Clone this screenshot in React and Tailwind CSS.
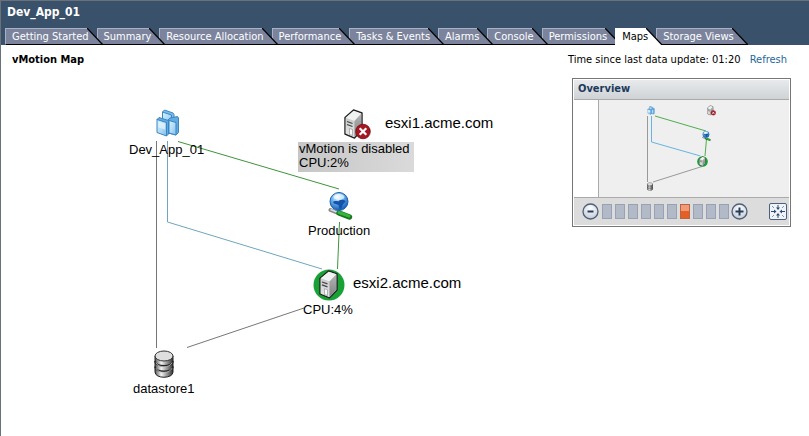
import { useState } from "react";

const tabs = [
  "Getting Started",
  "Summary",
  "Resource Allocation",
  "Performance",
  "Tasks & Events",
  "Alarms",
  "Console",
  "Permissions",
  "Maps",
  "Storage Views",
];

const zoomLevels = [0, 1, 2, 3, 4, 5, 6, 7, 8, 9];

function Defs() {
  return (
    <svg width="0" height="0" className="absolute" aria-hidden="true">
      <defs>
        <linearGradient id="cube" x1="0" y1="0" x2="1" y2="1">
          <stop offset="0" stopColor="#d9f0fd" />
          <stop offset="0.5" stopColor="#b3dcf8" />
          <stop offset="1" stopColor="#7dbdec" />
        </linearGradient>
        <linearGradient id="metal" x1="0" y1="0" x2="1" y2="0">
          <stop offset="0" stopColor="#555" />
          <stop offset="0.35" stopColor="#f2f2f2" />
          <stop offset="1" stopColor="#333" />
        </linearGradient>
        <linearGradient id="front" x1="0" y1="0" x2="0" y2="1">
          <stop offset="0" stopColor="#c9cbcc" />
          <stop offset="1" stopColor="#e6e7e8" />
        </linearGradient>
        <linearGradient id="side" x1="0" y1="0" x2="0" y2="1">
          <stop offset="0" stopColor="#b2b4b6" />
          <stop offset="1" stopColor="#808284" />
        </linearGradient>
        <radialGradient id="globe" cx="0.4" cy="0.25" r="0.8">
          <stop offset="0" stopColor="#e6f6ff" />
          <stop offset="0.4" stopColor="#6db4ee" />
          <stop offset="1" stopColor="#0c51b0" />
        </radialGradient>
        <radialGradient id="knob" cx="0.5" cy="0.3" r="0.7">
          <stop offset="0" stopColor="#fff" />
          <stop offset="1" stopColor="#c3cad5" />
        </radialGradient>
      </defs>
    </svg>
  );
}

function VAppIcon(props) {
  return (
    <svg viewBox="0 0 23 29" {...props}>
      <g stroke="#3a86c4" strokeLinejoin="round">
        <path d="M6.500 3 8.500 1 17 4l1 1.500V14H7z" fill="#7dbdec" />
        <path d="M6.500 3l9 3v9h-9z" fill="url(#cube)" />
        <path d="M12 11l2-2 7.500-1.500L22.500 9v14.500L20 26l-8-2z" fill="#62abe0" />
        <path d="M13 11.500l7 2V26l-7-2z" fill="url(#cube)" />
        <path d="M1 10.500 3 8.500l9.500 3V25L10.500 27z" fill="#62abe0" />
        <path d="M1 10.500l9.500 3V27L1 23.500z" fill="url(#cube)" />
      </g>
      <path d="M2.500 12.500l6.500 2v6l-6.500-2z" fill="#e8f7ff" opacity="0.7" />
    </svg>
  );
}

function ServerBody() {
  return (
    <g>
      <path d="M1 8.500 9.500 1 18 4v17l-7.500 8L1 25z" fill="#ccc" stroke="#222" strokeWidth="1.400" strokeLinejoin="round" />
      <path d="M1.700 8.700 9.700 1.700 17.300 4.500 10.500 12z" fill="#f1f2f2" />
      <path d="M1.700 9.200l8.800 3v16L1.700 24.500z" fill="url(#front)" />
      <path d="M10.500 12l6.800-7.300v16l-6.800 7.300z" fill="url(#side)" />
      <path d="M3 12.500l5.500 2M3 15.500l5.500 2" stroke="#444" strokeWidth="1.300" />
      <path d="M5.500 19.500l3 1v6l-3-1z" fill="#fafafa" stroke="#777" strokeWidth="0.500" />
    </g>
  );
}

function DisabledHostIcon(props) {
  return (
    <svg viewBox="0 0 27 31" {...props}>
      <ServerBody />
      <circle cx="19" cy="22.500" r="7.300" fill="#a51722" stroke="#6d0e15" strokeWidth="0.800" />
      <path d="M15.700 19.200l6.600 6.600M22.300 19.200l-6.600 6.600" stroke="#fff" strokeWidth="2.200" />
    </svg>
  );
}

function ActiveHostIcon(props) {
  return (
    <svg viewBox="0 0 32 32" {...props}>
      <circle cx="16" cy="16" r="15.500" fill="#18a236" />
      <g transform="translate(6 1) scale(1 0.960)">
        <ServerBody />
      </g>
    </svg>
  );
}

function NetworkIcon(props) {
  return (
    <svg viewBox="0 0 25 28" {...props}>
      <path d="M2.500 18 10 21" stroke="#888" strokeWidth="4" strokeLinecap="round" />
      <path d="M2.500 17.500 10 20.500" stroke="#ddd" strokeWidth="1.500" />
      <path d="M11 21 21.500 25" stroke="#14771c" strokeWidth="5.400" strokeLinecap="round" />
      <path d="M11 20.500 21 24.200" stroke="#35b43c" strokeWidth="3" strokeLinecap="round" />
      <circle cx="11" cy="9.500" r="9" fill="url(#globe)" stroke="#1b5fae" />
      <path d="M5 10c2-2 5 0 6-1 2-2 5-1 6.500 0-.5 2-2.500 2.500-3 4.500-.3 2-1.500 3.500-2.500 4-1-1.500-1-3-1.500-4.500C9 12 6 12.500 5 10z" fill="#1353a9" />
      <ellipse cx="11" cy="5" rx="5.500" ry="3" fill="#fff" opacity="0.650" />
    </svg>
  );
}

function DatastoreIcon(props) {
  return (
    <svg viewBox="0 0 20 28" {...props}>
      <path d="M1 6v16c0 7 18 7 18 0V6z" fill="url(#metal)" stroke="#222" />
      <path d="M1 11c0 6.500 18 6.500 18 0M1 16.500c0 6.500 18 6.500 18 0" fill="none" stroke="#222" strokeWidth="1.600" />
      <path d="M2 12.700c2 5.500 14 5.500 16 0M2 18.200c2 5.500 14 5.500 16 0" fill="none" stroke="#ccc" strokeWidth="0.800" />
      <ellipse cx="10" cy="6" rx="9" ry="5" fill="#dedede" stroke="#333" />
    </svg>
  );
}

function Tab({ label, active, onClick }) {
  return (
    <button
      type="button"
      role="tab"
      aria-selected={active}
      onClick={onClick}
      className={`-mr-1.5 flex h-[17px] shrink-0 whitespace-nowrap text-[11px] leading-[15px] ${active ? "relative z-30 text-black" : "text-white"}`}
    >
      <span className={`h-full border-t border-l pl-1.5 ${active ? "border-white bg-white" : "border-b border-[#a9b1c4] border-b-black bg-[#7b849c]"}`}>
        <span className="relative z-20 -mr-0.5 block">{label}</span>
      </span>
      <svg width="16" height="17" viewBox="0 0 16 17" className="relative z-10 shrink-0" aria-hidden="true">
        <path d="M0 0 16 17H0z" fill={active ? "#fff" : "#7b849c"} />
        <path d="M0 0 16 17" stroke="#000" strokeWidth="1.200" />
        {!active && <path d="M0 16.500h16" stroke="#000" />}
      </svg>
    </button>
  );
}

function VMotionMap() {
  return (
    <div className="relative h-[345px] text-[13px] leading-[15px]">
      <svg width="570" height="345" viewBox="1 75 570 345" fill="none" className="block" aria-hidden="true">
        <path d="M156.500 141v207M187 347.500 304 308" stroke="#777" />
        <path d="M167.500 141v81L322 269" stroke="#6fa6bd" />
        <path d="M178 141.500 339 189M339.500 222 337.500 269" stroke="#3b963b" />
      </svg>

      <VAppIcon className="absolute left-[155px] top-[34px] h-[29px] w-[23px]" />
      <span className="absolute left-32 top-[67px]">Dev_App_01</span>

      <DisabledHostIcon className="absolute left-[343px] top-[34px] h-[31px] w-[27px]" />
      <span className="absolute left-96 top-10 text-[15px]">esxi1.acme.com</span>
      <div className="absolute left-[297px] top-[67px] h-[30px] w-[116px] bg-linear-to-r from-[#c6c6c6] to-[#dadada] pl-px leading-[14px]">
        <p>vMotion is disabled</p>
        <p>CPU:2%</p>
      </div>

      <NetworkIcon className="absolute left-[327px] top-[117px] h-[28px] w-[25px]" />
      <span className="absolute left-[307px] top-[148px]">Production</span>

      <ActiveHostIcon className="absolute left-[312px] top-[194px] size-8" />
      <span className="absolute left-[352px] top-[200px] text-[15px]">esxi2.acme.com</span>
      <span className="absolute left-[302px] top-[227px]">CPU:4%</span>

      <DatastoreIcon className="absolute left-[153px] top-[275px] h-[28px] w-[20px]" />
      <span className="absolute left-[132px] top-[306px]">datastore1</span>
    </div>
  );
}

function KnobButton({ label, plus, onClick }) {
  return (
    <button type="button" aria-label={label} onClick={onClick} className="shrink-0">
      <svg width="17" height="17" viewBox="0 0 17 17">
        <circle cx="8.500" cy="8.500" r="7.500" fill="url(#knob)" stroke="#4d607a" strokeWidth="1.300" />
        <path d={plus ? "M4.500 8.500h8M8.500 4.500v8" : "M5.500 8.500h6"} stroke="#263e5c" strokeWidth="2" />
      </svg>
    </button>
  );
}

function Overview() {
  const [level, setLevel] = useState(6);

  return (
    <section className="mt-2.5 border border-[#777] bg-white p-px text-[#1c3a5c]">
      <h2 className="h-5 border-b border-[#aaa] bg-linear-to-b from-[#e8eaec] to-[#cfd3d6] pl-1 text-[11px] font-bold leading-[18px]">
        Overview
      </h2>

      {/* Miniature of the whole map */}
      <svg viewBox="574 100 215 97" className="block w-full" fill="none" aria-hidden="true">
        <path d="M599 100h190v97H599z" fill="#efefef" />
        <path d="M598.500 100v97" stroke="#aaa" />
        <path d="M647.500 116v66M653 182l49-15.500" stroke="#999" />
        <path d="M651.500 116v26l49 14" stroke="#65b5e2" />
        <path d="M655 116l51 15M706.500 139 705 156" stroke="#4eae4e" />
        <VAppIcon x="647" y="106" width="8" height="9" />
        <DisabledHostIcon x="707" y="105" width="9" height="11" />
        <NetworkIcon x="702" y="131" width="9" height="10" />
        <ActiveHostIcon x="697" y="156" width="11" height="11" />
        <DatastoreIcon x="647" y="182" width="6" height="9" />
      </svg>

      <div className="flex h-7 items-center border-t border-[#aaa] bg-[#dcdcdc] pl-2 pr-0.5">
        <KnobButton label="Zoom out" onClick={() => setLevel(Math.max(0, level - 1))} />
        <div className="ml-[3px] mr-0.5 flex gap-[3px]">
          {zoomLevels.map((n) => (
            <button
              key={n}
              type="button"
              aria-label={`Zoom level ${n + 1}`}
              onClick={() => setLevel(n)}
              className={`h-[15px] w-2.5 border ${n === level ? "border-[#b96442] bg-linear-to-b from-[#f19a75] from-45% to-[#e65f25] to-50%" : "border-[#98a2b4] bg-[#b2bac8]"}`}
            />
          ))}
        </div>
        <KnobButton label="Zoom in" plus onClick={() => setLevel(Math.min(9, level + 1))} />
        <button type="button" aria-label="Fit to window" className="ml-auto">
          <svg width="18" height="17" viewBox="0 0 18 17">
            <rect x="0.500" y="0.500" width="17" height="16" rx="1.500" fill="#f0f4f8" stroke="#49617e" />
            <path d="M9 2v4M9 15v-4M2 8.500h4M16 8.500h-4" stroke="#2c4d74" />
            <path d="M3 3l2 2M15 3l-2 2M3 14l2-2M15 14l-2-2" stroke="#7f97b3" />
            <path d="M7 4.500h4L9 7zM7 12.500h4L9 10zM5 6.500v4l2.500-2zM13 6.500v4l-2.500-2z" fill="#2c4d74" />
          </svg>
        </button>
      </div>
    </section>
  );
}

export default function App() {
  const [tab, setTab] = useState("Maps");

  return (
    <div className="min-h-screen border-l border-t border-[#687278] bg-white font-['DejaVu_Sans_Condensed','Noto_Sans',sans-serif] text-black">
      <Defs />
      <header className="bg-[#3a516b]">
        <h1 className="h-[27px] pl-1.5 pt-[3px] text-[12px] font-bold leading-4 text-white">Dev_App_01</h1>
        <div role="tablist" className="flex overflow-hidden pl-1">
          {tabs.map((label) => (
            <Tab key={label} label={label} active={label === tab} onClick={() => setTab(label)} />
          ))}
        </div>
      </header>

      <main className="flex justify-between pr-[18px]">
        <div className="min-w-0 flex-1 font-['Liberation_Sans',Arial,sans-serif]">
          <h2 className="h-[30px] pl-[11px] pt-[7px] font-['DejaVu_Sans_Condensed','Noto_Sans',sans-serif] text-[11px] font-bold leading-4">
            vMotion Map
          </h2>
          <VMotionMap />
        </div>
        <aside className="w-[219px] shrink-0 pt-[7px]">
          <div className="-ml-1 flex justify-between whitespace-nowrap pr-1 text-[11px] leading-4">
            <span>Time since last data update: 01:20</span>
            <a href="#refresh" className="text-[#23689b]">Refresh</a>
          </div>
          <Overview />
        </aside>
      </main>
    </div>
  );
}
